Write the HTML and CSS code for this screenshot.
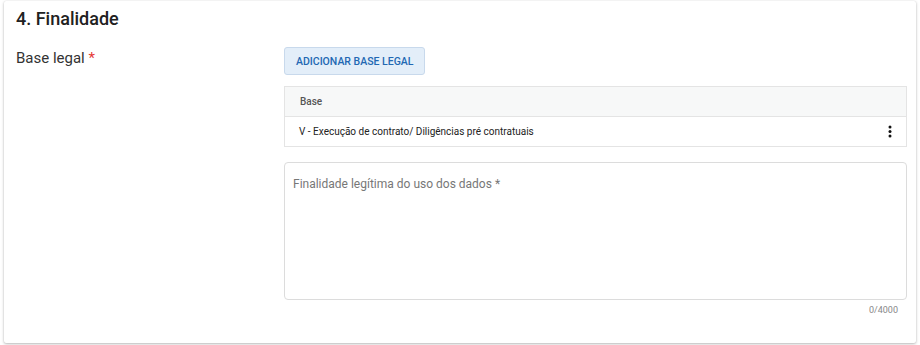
FILE: index.html
```html
<!DOCTYPE html>
<html>
  <head>
    <title>Finalidade</title>
    <link rel="stylesheet" href="styles.css">
  </head>
  <body>
    <div class="card">
      <h2 class="section-title">4. Finalidade</h2>

      <div class="field-row">
        <label class="field-label">Base legal <span class="req">*</span></label>

        <div class="field-body">
          <button type="button" class="btn-add">Adicionar base legal</button>

          <table class="grid">
            <thead>
              <tr><th>Base</th><th class="col-menu"></th></tr>
            </thead>
            <tbody>
              <tr>
                <td>V - Execução de contrato/ Diligências pré contratuais</td>
                <td class="col-menu">
                  <svg class="kebab" width="4" height="13" viewBox="0 0 4 13">
                    <circle cx="2" cy="2" r="1.5"/>
                    <circle cx="2" cy="6.5" r="1.5"/>
                    <circle cx="2" cy="11" r="1.5"/>
                  </svg>
                </td>
              </tr>
            </tbody>
          </table>

          <div class="textbox">
            <textarea placeholder="Finalidade legítima do uso dos dados *"></textarea>
          </div>
          <div class="counter">0/4000</div>
        </div>
      </div>
    </div>
  </body>
</html>
```

FILE: styles.css
```css
/* page
------------------------------- */

body
{
  margin: 0;
  padding: 1px 4px 3px 4px;
  background-color: #fff;
  font-family: Roboto, "Liberation Sans", sans-serif;
  color: #212121;
}

.card
{
  background-color: #fff;
  padding: 6px 9px 28px 12px;
  border-radius: 2px;
  box-shadow: 0 1px 3px rgba(0, 0, 0, 0.28), 0 0 1px rgba(0, 0, 0, 0.12);
}

.section-title
{
  margin: 0 0 16px 0;
  font-size: 18px;
  line-height: 24px;
  font-weight: 500;
}

/* field row
------------------------------- */

.field-row
{
  display: flex;
}

.field-label
{
  width: 268px;
  flex: none;
  font-size: 15px;
  line-height: 22px;
  color: #333;
}

.req
{
  color: #e53935;
}

.field-body
{
  flex: 1;
  display: flex;
  flex-direction: column;
  align-items: flex-start;
}

.btn-add
{
  height: 28px;
  padding: 0 11px;
  border: 1px solid #c8d9ec;
  border-radius: 3px;
  background-color: #e3eef9;
  color: #2268b3;
  font-family: inherit;
  font-size: 10.5px;
  font-weight: 500;
  text-transform: uppercase;
}

/* table
------------------------------- */

.grid
{
  width: 100%;
  margin-top: 11px;
  border-collapse: collapse;
  border: 1px solid #e4e4e4;
  font-size: 10px;
}

.grid th
{
  height: 29px;
  padding: 0 0 0 15px;
  background-color: #f7f8f8;
  border-bottom: 1px solid #e4e4e4;
  text-align: left;
  font-weight: 500;
  color: #555;
}

.grid td
{
  height: 29px;
  padding: 0 0 0 14px;
  color: #222;
}

.grid .col-menu
{
  width: 30px;
  padding: 0 14px 0 0;
  text-align: right;
}

.kebab
{
  display: inline-block;
  vertical-align: middle;
  fill: #111;
}

/* textarea
------------------------------- */

.textbox
{
  width: 100%;
  box-sizing: border-box;
  margin-top: 15px;
  height: 138px;
  border: 1px solid #dcdcdc;
  border-radius: 4px;
  padding: 14px 8px;
}

.textbox textarea
{
  width: 100%;
  height: 100%;
  border: none;
  outline: none;
  resize: none;
  padding: 0;
  font-family: inherit;
  font-size: 12px;
  color: #333;
}

.textbox textarea::placeholder
{
  color: #777;
}

.counter
{
  align-self: flex-end;
  margin: 5px 9px 0 0;
  font-size: 9px;
  color: #888;
}
```
